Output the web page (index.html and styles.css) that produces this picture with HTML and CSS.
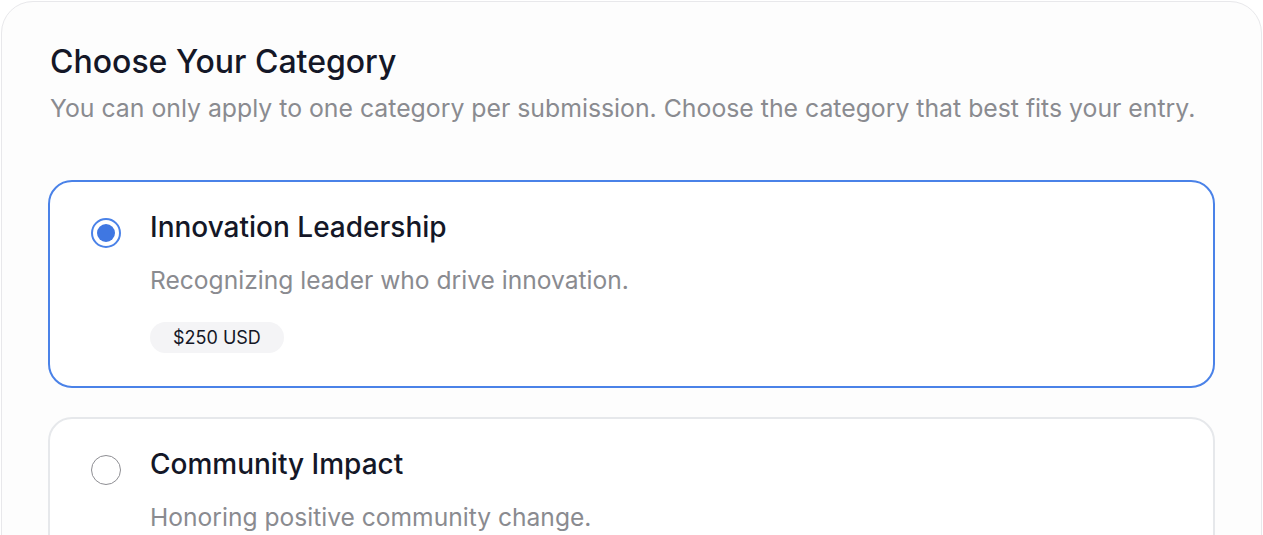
FILE: index.html
```html
<!DOCTYPE html>
<html lang="en">
<head>
    <meta charset="UTF-8">
    <meta name="viewport" content="width=device-width, initial-scale=1.0">
    <title>Choose Your Category</title>
    <link rel="stylesheet" href="styles.css">
</head>
<body>
    <section class="panel">
        <h2 class="panel-title">Choose Your Category</h2>
        <p class="panel-sub">You can only apply to one category per submission. Choose the category that best fits your entry.</p>

        <div class="options">
            <label class="option option-active">
                <span class="radio radio-checked"></span>
                <span class="option-body">
                    <span class="option-title">Innovation Leadership</span>
                    <span class="option-desc">Recognizing leader who drive innovation.</span>
                    <span class="price">$250 USD</span>
                </span>
            </label>

            <label class="option">
                <span class="radio"></span>
                <span class="option-body">
                    <span class="option-title">Community Impact</span>
                    <span class="option-desc">Honoring positive community change.</span>
                    <span class="price">$250 USD</span>
                </span>
            </label>
        </div>
    </section>
</body>
</html>
```

FILE: styles.css
```css
* {
    margin: 0;
    padding: 0;
    box-sizing: border-box;
}
body {
    background: #ffffff;
    font-family: Inter, "Noto Sans", sans-serif;
    color: #141727;
    padding: 1px;
}
.panel {
    background: #fdfdfd;
    border: 1px solid #e8e8eb;
    border-radius: 32px;
    padding: 41px 46px 40px;
}
.panel-title {
    font-size: 32px;
    line-height: 38px;
    font-weight: 500;
    color: #141727;
    padding-left: 2px;
}
.panel-sub {
    margin-top: 10px;
    padding-left: 2px;
    font-size: 24.8px;
    line-height: 34px;
    color: #8a8b90;
}
.options {
    margin-top: 55px;
    display: flex;
    flex-direction: column;
    gap: 29px;
}
.option {
    display: flex;
    gap: 29px;
    padding: 34px 40px 33px 41px;
    border: 2px solid #e6e8eb;
    border-radius: 24px;
    background: #fff;
    cursor: pointer;
}
.option-active {
    border-color: #4a82e8;
}
/* radio */
.radio {
    flex: none;
    width: 30px;
    height: 30px;
    border-radius: 50%;
    border: 1.5px solid #8e8e93;
    margin-top: 2px;
    display: flex;
    align-items: center;
    justify-content: center;
    background: #fff;
}
.radio-checked {
    border: 2px solid #4a82e8;
}
.radio-checked::after {
    content: '';
    width: 18px;
    height: 18px;
    border-radius: 50%;
    background: #3f77e2;
}
.option-body {
    display: flex;
    flex-direction: column;
    align-items: flex-start;
}
.option-title {
    font-size: 28px;
    line-height: 34px;
    font-weight: 500;
    margin-top: -6px;
}
.option-desc {
    margin-top: 20px;
    font-size: 24.6px;
    line-height: 33px;
    color: #8a8b90;
}
.price {
    margin-top: 25px;
    background: #f4f4f6;
    border-radius: 16px;
    padding: 0 23px;
    height: 31px;
    line-height: 31px;
    font-size: 18px;
    color: #141727;
}
```
